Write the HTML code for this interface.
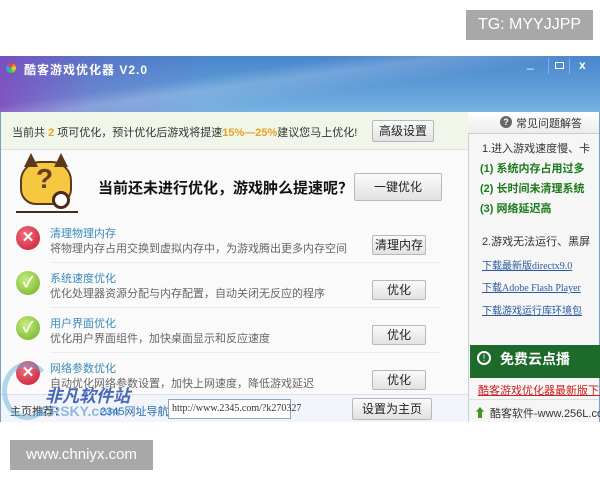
<!DOCTYPE html>
<html><head><meta charset="utf-8"><style>
*{margin:0;padding:0;box-sizing:border-box}
body{width:600px;height:480px;background:#fff;position:relative;overflow:hidden;font-family:"Liberation Sans","Noto Sans CJK SC",sans-serif;font-size:12px;color:#333}
.a{position:absolute;white-space:nowrap}
.btn{position:absolute;border:1px solid #b8b8b8;border-radius:2px;background:linear-gradient(#fafafa,#e2e2e2);text-align:center;color:#222}
.t{color:#3a8ab8;font-size:11px}
.d{color:#666;font-size:11px}
.ic{position:absolute;width:24px;height:24px;border-radius:50%;color:#fff;text-align:center;font-weight:bold;font-size:15px;line-height:24px}
.r{background:radial-gradient(circle at 40% 35%,#f07080,#c81830)}
.g{background:radial-gradient(circle at 40% 35%,#c8ec80,#6aae20)}
.sep{position:absolute;left:50px;width:390px;height:1px;background:#ececec}
.gr{color:#1a7a1a;font-weight:bold;font-size:11px}
.lk{color:#2a5aa0;text-decoration:underline;font-size:10px;font-family:"Liberation Serif","Noto Sans CJK SC",serif}
</style></head><body>
<div class="a" style="left:466px;top:10px;width:127px;height:30px;background:#a8a8a8;color:#fff;font-size:16px;line-height:30px;text-align:center">TG: MYYJJPP</div>

<div class="a" style="left:0;top:56px;width:600px;height:366px;background:#fafafa;border:1px solid #7aa0c8"></div>
<div class="a" style="left:0;top:56px;width:600px;height:56px;background:linear-gradient(#4a86cc,#5c9ad6 50%,#78b2e2)"></div>
<div class="a" style="left:0;top:56px;width:600px;height:56px;background:linear-gradient(90deg,rgba(130,70,190,.85) 0%,rgba(110,90,190,.4) 15%,rgba(90,120,200,0) 35%)"></div>
<div class="a" style="left:0;top:56px;width:600px;height:56px;background:linear-gradient(172deg,rgba(255,255,255,0) 35%,rgba(255,255,255,.18) 45%,rgba(255,255,255,0) 60%)"></div>
<div class="a" style="left:6px;top:63px;width:10px;height:10px;background:conic-gradient(#e33,#fc3,#3c3,#39f,#e33);border-radius:50%"></div>
<div class="a" style="left:24px;top:61px;color:#fff;font-weight:bold;font-size:12px;letter-spacing:1px">酷客游戏优化器 V2.0</div>
<div class="a" style="left:527px;top:56px;color:#fff;font-size:12px">_</div>
<div class="a" style="left:548px;top:58px;width:22px;height:16px;border-left:1px solid rgba(255,255,255,.3);border-right:1px solid rgba(255,255,255,.3)"><div style="margin:4px 6px;width:9px;height:7px;border:1px solid #fff"></div></div>
<div class="a" style="left:579px;top:58px;color:#fff;font-weight:bold;font-size:12px">x</div>

<div class="a" style="left:1px;top:112px;width:467px;height:38px;background:#f0f7ea;border-bottom:1px solid #dde"></div>
<div class="a" style="left:12px;top:124px;font-size:11px">当前共 <b style="color:#e8a020">2</b> 项可优化，预计优化后游戏将提速<b style="color:#e8a020">15%—25%</b>建议您马上优化!</div>
<div class="btn" style="left:372px;top:120px;width:62px;height:22px;line-height:20px">高级设置</div>

<div class="a" style="left:468px;top:112px;width:131px;height:310px;background:#f6f6f6;border-left:1px solid #c8d0d8"></div>
<div class="a" style="left:468px;top:112px;width:131px;height:22px;background:linear-gradient(#fff,#ececec);border-bottom:1px solid #ccc"></div>
<div class="a" style="left:500px;top:116px;width:12px;height:12px;border-radius:50%;background:#666;color:#fff;font-size:9px;line-height:12px;text-align:center;font-weight:bold">?</div>
<div class="a" style="left:516px;top:115px;font-size:11px">常见问题解答</div>
<div class="a" style="left:482px;top:140px;font-size:11px">1.进入游戏速度慢、卡</div>
<div class="a gr" style="left:480px;top:160px">(1) 系统内存占用过多</div>
<div class="a gr" style="left:480px;top:180px">(2) 长时间未清理系统</div>
<div class="a gr" style="left:480px;top:200px">(3) 网络延迟高</div>
<div class="a" style="left:482px;top:233px;font-size:11px">2.游戏无法运行、黑屏</div>
<div class="a lk" style="left:482px;top:257px">下载最新版directx9.0</div>
<div class="a lk" style="left:482px;top:279px">下载Adobe Flash Player</div>
<div class="a lk" style="left:482px;top:302px">下载游戏运行库环境包</div>
<div class="a" style="left:470px;top:345px;width:130px;height:33px;background:#1e6a2a;color:#fff;font-weight:bold;font-size:14px;line-height:28px;padding-left:30px">免费云点播</div>
<div class="a" style="left:477px;top:351px;width:14px;height:14px;border:2px solid #fff;border-radius:50%;color:#fff;font-size:9px;line-height:10px;text-align:center">!</div>
<div class="a" style="left:478px;top:382px;color:#c82020;font-size:11px;text-decoration:underline">酷客游戏优化器最新版下载</div>
<div class="a" style="left:468px;top:399px;width:131px;height:1px;background:#ddd"></div>
<div class="a" style="left:474px;top:404px;color:#3a9a20;font-size:12px">⬆</div>
<div class="a" style="left:490px;top:405px;font-size:11px">酷客软件-www.256L.com</div>

<div class="a" style="left:16px;top:153px;width:62px;height:60px">
<div style="position:absolute;left:4px;top:8px;width:52px;height:44px;background:#f6c842;border:2px solid #5a3a1a;border-radius:20px 20px 16px 16px"></div>
<div style="position:absolute;left:8px;top:0;width:0;height:0;border-left:7px solid transparent;border-right:7px solid transparent;border-bottom:14px solid #5a3a1a"></div>
<div style="position:absolute;left:38px;top:0;width:0;height:0;border-left:7px solid transparent;border-right:7px solid transparent;border-bottom:14px solid #5a3a1a"></div>
<div style="position:absolute;left:20px;top:10px;color:#6a3a2a;font-weight:bold;font-size:28px">?</div>
<div style="position:absolute;left:36px;top:38px;width:18px;height:18px;border-radius:50%;background:#fff;border:3px solid #4a2a1a"></div>
<div style="position:absolute;left:0;top:58px;width:62px;height:2px;background:#4a2a1a"></div>
</div>
<div class="a" style="left:98px;top:177px;font-size:15px;font-weight:bold;color:#111">当前还未进行优化，游戏肿么提速呢？</div>
<div class="btn" style="left:354px;top:173px;width:88px;height:28px;line-height:26px;font-size:12px">一键优化</div>

<div class="ic r" style="left:16px;top:226px">✕</div>
<div class="a t" style="left:50px;top:225px">清理物理内存</div>
<div class="a d" style="left:50px;top:240px">将物理内存占用交换到虚拟内存中，为游戏腾出更多内存空间</div>
<div class="btn" style="left:372px;top:235px;width:54px;height:20px;line-height:18px">清理内存</div>
<div class="sep" style="top:262px"></div>

<div class="ic g" style="left:16px;top:271px">✓</div>
<div class="a t" style="left:50px;top:270px">系统速度优化</div>
<div class="a d" style="left:50px;top:285px">优化处理器资源分配与内存配置，自动关闭无反应的程序</div>
<div class="btn" style="left:372px;top:280px;width:54px;height:20px;line-height:18px">优化</div>
<div class="sep" style="top:307px"></div>

<div class="ic g" style="left:16px;top:316px">✓</div>
<div class="a t" style="left:50px;top:315px">用户界面优化</div>
<div class="a d" style="left:50px;top:330px">优化用户界面组件，加快桌面显示和反应速度</div>
<div class="btn" style="left:372px;top:325px;width:54px;height:20px;line-height:18px">优化</div>
<div class="sep" style="top:352px"></div>

<div class="ic r" style="left:16px;top:361px">✕</div>
<div class="a t" style="left:50px;top:360px">网络参数优化</div>
<div class="a d" style="left:50px;top:375px">自动优化网络参数设置，加快上网速度，降低游戏延迟</div>
<div class="btn" style="left:372px;top:370px;width:54px;height:20px;line-height:18px">优化</div>

<div class="a" style="left:1px;top:394px;width:467px;height:28px;background:#f2f6fa;border-top:1px solid #dde"></div>
<div class="a" style="left:10px;top:403px;font-size:11px">主页推荐：</div>
<div class="a" style="left:100px;top:403px;font-size:11px;color:#2a6ab0">2345网址导航</div>
<div class="a" style="left:168px;top:399px;width:123px;height:20px;border:1px solid #8aa8c8;background:#fff;font-family:'Liberation Serif',serif;font-size:10px;line-height:18px;padding-left:3px">http://www.2345.com/?k270327</div>
<div class="btn" style="left:352px;top:398px;width:80px;height:22px;line-height:20px">设置为主页</div>

<div class="a" style="left:2px;top:362px;width:50px;height:58px;border-radius:50%;border:5px solid rgba(90,170,220,.45);border-right-color:transparent"></div>
<div class="a" style="left:45px;top:382px;font-size:17px;font-weight:bold;font-style:italic;color:rgba(40,80,170,.85)">非凡软件站</div>
<div class="a" style="left:40px;top:403px;font-size:14px;font-weight:bold;color:rgba(60,130,200,.55)">CRSKY.com</div>

<div class="a" style="left:10px;top:440px;width:143px;height:30px;background:#a8a8a8;color:#fff;font-size:15px;line-height:30px;text-align:center">www.chniyx.com</div>
</body></html>
